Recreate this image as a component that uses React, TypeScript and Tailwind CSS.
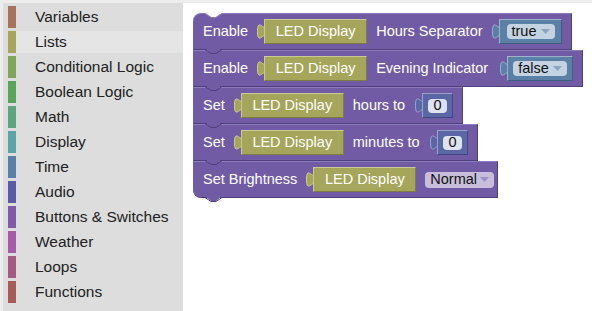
import clsx from "clsx";
import type { ReactNode } from "react";

const categories = [
  { name: "Variables", bar: "bg-[#a5745b]" },
  { name: "Lists", bar: "bg-[#a5a55b]", active: true },
  { name: "Conditional Logic", bar: "bg-[#80a55b]" },
  { name: "Boolean Logic", bar: "bg-[#5ba55b]" },
  { name: "Math", bar: "bg-[#5ba580]" },
  { name: "Display", bar: "bg-[#5ba5a5]" },
  { name: "Time", bar: "bg-[#5b80a5]" },
  { name: "Audio", bar: "bg-[#5b5ba5]" },
  { name: "Buttons & Switches", bar: "bg-[#805ba5]" },
  { name: "Weather", bar: "bg-[#a55ba5]" },
  { name: "Loops", bar: "bg-[#a55b80]" },
  { name: "Functions", bar: "bg-[#a55b5b]" },
];

// puzzle tab on the left of a value block
function Tab({ fill, stroke }: { fill: string; stroke: string }) {
  return (
    <svg width="8" height="25" viewBox="0 0 8 25" className="-mr-[1px] shrink-0">
      <path
        d="M8.5,5 c0,10 -8,-8 -8,7.5 s8,-2.5 8,7.5 Z"
        fill={fill}
        stroke={stroke}
        strokeWidth="1"
      />
    </svg>
  );
}

function Arrow({ color }: { color: string }) {
  return (
    <svg width="9" height="5" viewBox="0 0 9 5" className="shrink-0">
      <path d="M0,0 H9 L4.5,5 Z" fill={color} />
    </svg>
  );
}

function LedDisplay() {
  return (
    <div className="flex shrink-0 items-center">
      <Tab fill="#a5a55b" stroke="#cfcf9a" />
      <div className="flex h-[25px] w-[103px] shrink-0 items-center justify-center whitespace-nowrap border border-[#c9c992] border-r-[#7d7d40] border-b-[#7d7d40] bg-[#a5a55b] text-white">
        LED Display
      </div>
    </div>
  );
}

function BoolDropdown({ value, body, pill }: { value: string; body: string; pill: string }) {
  return (
    <div className="ml-auto flex shrink-0 items-center">
      <Tab fill="#5b80a5" stroke="#9ab3cc" />
      <div
        className={clsx(
          "flex h-[25px] shrink-0 items-center justify-center border border-[#9cb3cb] border-r-[#3f5f80] border-b-[#3f5f80] bg-[#5b80a5]",
          body
        )}
      >
        <div
          className={clsx(
            "flex h-[15px] shrink-0 items-center justify-center gap-[4px] rounded-[4px] bg-[#c4d3e2] text-[#111]",
            pill
          )}
        >
          <span>{value}</span>
          <Arrow color="#8ca5c1" />
        </div>
      </div>
    </div>
  );
}

function NumberBlock({ value }: { value: string }) {
  return (
    <div className="ml-auto flex shrink-0 items-center">
      <Tab fill="#5b67a5" stroke="#9aa2cc" />
      <div className="flex h-[25px] w-[31px] shrink-0 items-center justify-center border border-[#9aa1cc] border-r-[#3f4880] border-b-[#3f4880] bg-[#5b67a5]">
        <div className="flex h-[14px] w-[19px] items-center justify-center rounded-[4px] bg-[#dfe2f0] text-[#111]">
          {value}
        </div>
      </div>
    </div>
  );
}

function Statement({
  children,
  width,
  first,
  last,
}: {
  children: ReactNode;
  width: string;
  first?: boolean;
  last?: boolean;
}) {
  return (
    <div
      className={clsx(
        "relative flex h-[37px] shrink-0 items-center gap-[9px] whitespace-nowrap border-t border-r border-b border-[#4f3f7d] border-t-[#8e7bbf] bg-[#725ba5] pl-[10px] pr-[9px] text-white",
        width,
        first && "rounded-tl-[8px]",
        last && "rounded-bl-[8px]"
      )}
    >
      {first && (
        <svg width="17" height="5" viewBox="0 0 17 5" className="absolute -top-[1px] left-[12px]">
          <path d="M0,0 H17 L11,4 H6 Z" fill="#ffffff" />
          <path d="M0,0.5 L6,4.5 H11 L17,0.5" fill="none" stroke="#8e7bbf" strokeWidth="1" />
        </svg>
      )}
      <svg width="17" height="6" viewBox="0 0 17 6" className="absolute -bottom-[5px] left-[12px] z-10">
        <path d="M0,0 H17 L11,5 H6 Z" fill="#725ba5" />
        <path d="M0,1.5 L6,5.5 H11 L17,1.5" fill="none" stroke="#4f3f7d" strokeWidth="1" />
      </svg>
      {children}
    </div>
  );
}

export default function App() {
  return (
    <div className="flex h-[311px] w-[592px] flex-col overflow-hidden bg-white font-['Liberation_Sans',Arial,sans-serif]">
      <div className="h-[3px] shrink-0 bg-[#ededed]" />
      <div className="flex flex-1">
        <aside className="flex w-[183px] shrink-0 flex-col gap-[3px] border-l-[3px] border-[#ededed] bg-[#dddddd] pt-[3px]">
          {categories.map((c) => (
            <div key={c.name} className="flex h-[22px] items-center">
              <div className={clsx("ml-[5px] h-full w-[8px]", c.bar)} />
              <div
                className={clsx(
                  "flex h-full flex-1 items-center pl-[19px] text-[15.5px] text-[#222]",
                  c.active && "bg-[#e5e5e5]"
                )}
              >
                {c.name}
              </div>
            </div>
          ))}
        </aside>

        <main className="flex min-w-0 flex-1 flex-col items-start pl-[10px] pt-[10px] text-[14.5px]">
          <Statement first width="w-[379px]">
            <span>Enable</span>
            <LedDisplay />
            <span>Hours Separator</span>
            <BoolDropdown value="true" body="w-[63px]" pill="w-[48px]" />
          </Statement>
          <Statement width="w-[390px]">
            <span>Enable</span>
            <LedDisplay />
            <span>Evening Indicator</span>
            <BoolDropdown value="false" body="w-[66px]" pill="w-[54px]" />
          </Statement>
          <Statement width="w-[270px]">
            <span>Set</span>
            <LedDisplay />
            <span>hours to</span>
            <NumberBlock value="0" />
          </Statement>
          <Statement width="w-[285px]">
            <span>Set</span>
            <LedDisplay />
            <span>minutes to</span>
            <NumberBlock value="0" />
          </Statement>
          <Statement last width="w-[305px]">
            <span>Set Brightness</span>
            <LedDisplay />
            <div className="-ml-[4px] -mr-[3px] ml-auto flex h-[16px] shrink-0 items-center gap-[3px] rounded-[4px] bg-[#c8bedc] px-[5px] text-[#111]">
              <span>Normal</span>
              <Arrow color="#9d8fc4" />
            </div>
          </Statement>
        </main>
      </div>
    </div>
  );
}
